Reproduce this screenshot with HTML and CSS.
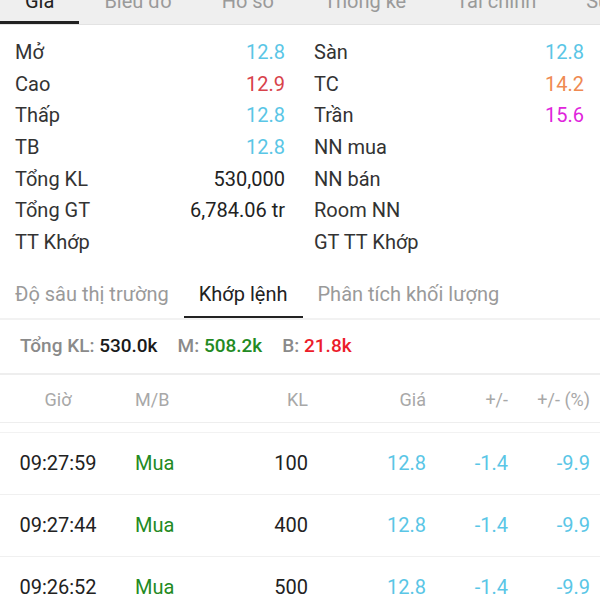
FILE: index.html
```html
<!DOCTYPE html>
<html lang="vi">
<head>
<meta charset="utf-8">
<link rel="stylesheet" href="styles.css">
</head>
<body>
<nav class="topbar">
  <div class="tab active">Giá</div>
  <div class="tab">Biểu đồ</div>
  <div class="tab">Hồ sơ</div>
  <div class="tab">Thống kê</div>
  <div class="tab">Tài chính</div>
  <div class="tab">Sự kiện</div>
</nav>

<section class="info">
  <div class="col col-left">
    <div class="row"><span class="lbl">Mở</span><span class="val cyan">12.8</span></div>
    <div class="row"><span class="lbl">Cao</span><span class="val red">12.9</span></div>
    <div class="row"><span class="lbl">Thấp</span><span class="val cyan">12.8</span></div>
    <div class="row"><span class="lbl">TB</span><span class="val cyan">12.8</span></div>
    <div class="row"><span class="lbl">Tổng KL</span><span class="val">530,000</span></div>
    <div class="row"><span class="lbl">Tổng GT</span><span class="val">6,784.06 tr</span></div>
    <div class="row"><span class="lbl">TT Khớp</span><span class="val"></span></div>
  </div>
  <div class="col col-right">
    <div class="row"><span class="lbl">Sàn</span><span class="val cyan">12.8</span></div>
    <div class="row"><span class="lbl">TC</span><span class="val orange">14.2</span></div>
    <div class="row"><span class="lbl">Trần</span><span class="val magenta">15.6</span></div>
    <div class="row"><span class="lbl">NN mua</span><span class="val"></span></div>
    <div class="row"><span class="lbl">NN bán</span><span class="val"></span></div>
    <div class="row"><span class="lbl">Room NN</span><span class="val"></span></div>
    <div class="row"><span class="lbl">GT TT Khớp</span><span class="val"></span></div>
  </div>
</section>

<nav class="subtabs">
  <div class="subtab">Độ sâu thị trường</div>
  <div class="subtab active">Khớp lệnh</div>
  <div class="subtab">Phân tích khối lượng</div>
</nav>

<div class="summary">
  <span class="grp"><span class="slbl">Tổng KL: </span><span class="sval">530.0k</span></span>
  <span class="grp"><span class="slbl">M: </span><span class="sval green">508.2k</span></span>
  <span class="grp"><span class="slbl">B: </span><span class="sval bred">21.8k</span></span>
</div>

<div class="thead">
  <span class="c1">Giờ</span>
  <span class="c2">M/B</span>
  <span class="c3">KL</span>
  <span class="c4">Giá</span>
  <span class="c5">+/-</span>
  <span class="c6">+/- (%)</span>
</div>

<div class="tlist">
  <div class="trow">
    <span class="c1">09:27:59</span>
    <span class="c2 green">Mua</span>
    <span class="c3">100</span>
    <span class="c4 cyan">12.8</span>
    <span class="c5 cyan">-1.4</span>
    <span class="c6 cyan">-9.9</span>
  </div>
  <div class="trow">
    <span class="c1">09:27:44</span>
    <span class="c2 green">Mua</span>
    <span class="c3">400</span>
    <span class="c4 cyan">12.8</span>
    <span class="c5 cyan">-1.4</span>
    <span class="c6 cyan">-9.9</span>
  </div>
  <div class="trow">
    <span class="c1">09:26:52</span>
    <span class="c2 green">Mua</span>
    <span class="c3">500</span>
    <span class="c4 cyan">12.8</span>
    <span class="c5 cyan">-1.4</span>
    <span class="c6 cyan">-9.9</span>
  </div>
</div>
</body>
</html>
```

FILE: styles.css
```css
html, body {
  margin: 0;
  padding: 0;
  background: #ffffff;
}
body {
  width: 600px;
  height: 600px;
  overflow: hidden;
  font-family: Roboto, "Noto Sans", sans-serif;
  color: #222222;
}

/* Top tabs (cut off at the top of the viewport) */
.topbar {
  display: flex;
  margin-top: -9px;
  height: 34px;
  box-sizing: border-box;
  background: #efefef;
  border-bottom: 1px solid #e3e3e3;
  white-space: nowrap;
  overflow: hidden;
}
.tab {
  flex: none;
  padding: 0 25px;
  font-size: 20px;
  line-height: 20px;
  color: #9a9a9a;
  box-sizing: border-box;
  height: 100%;
}
.tab.active {
  color: #222222;
  border-bottom: 3px solid #222222;
}

/* Info grid */
.info {
  display: flex;
  padding-top: 12px;
}
.col {
  width: 300px;
  box-sizing: border-box;
}
.col-left { padding: 0 15px 0 15px; }
.col-right { padding: 0 16px 0 14px; }
.row {
  display: flex;
  justify-content: space-between;
  height: 31.7px;
  line-height: 31.7px;
  font-size: 20px;
}
.lbl { color: #333333; }
.val { color: #222222; }

.cyan { color: #5ac6e6; }
.red { color: #d8434b; }
.orange { color: #ef8a52; }
.magenta { color: #e025dc; }
.green { color: #238a23; }
.bred { color: #ec1c2a; }

/* Sub tabs */
.subtabs {
  display: flex;
  border-bottom: 2px solid #f2f2f2;
}
.subtab {
  padding: 23px 15px 10px;
  line-height: 24px;
  font-size: 20px;
  color: #9a9a9a;
  border-bottom: 2px solid transparent;
  white-space: nowrap;
}
.subtab.active {
  color: #222222;
  border-bottom-color: #222222;
}

/* Summary */
.summary {
  display: flex;
  gap: 20px;
  padding: 14px 20px 15px;
  line-height: 24px;
  font-size: 19px;
  font-weight: 500;
  border-bottom: 2px solid #eeeeee;
}
.slbl { color: #8a8a8a; }
.sval { color: #1a1a1a; }
.sval.green { color: #238a23; }
.sval.bred { color: #ec1c2a; }

/* Table */
.thead, .trow {
  display: grid;
  grid-template-columns: 116px 100px 92px 140px 60px 92px;
  align-items: center;
}
.thead {
  padding: 13px 0 10px;
  line-height: 24px;
  font-size: 18px;
  color: #a8a8a8;
  border-bottom: 1px solid #eeeeee;
  margin-bottom: 9px;
}
.tlist {
  border-top: 1px solid #f2f2f2;
}
.trow {
  height: 61px;
  line-height: 61px;
  font-size: 20px;
  border-bottom: 1px solid #f0f0f0;
}
.c1 { text-align: center; }
.c2 { padding-left: 19px; }
.c3 { text-align: right; }
.c4 { text-align: right; padding-right: 22px; }
.c5 { text-align: right; }
.c6 { text-align: right; padding-right: 10px; }
```
